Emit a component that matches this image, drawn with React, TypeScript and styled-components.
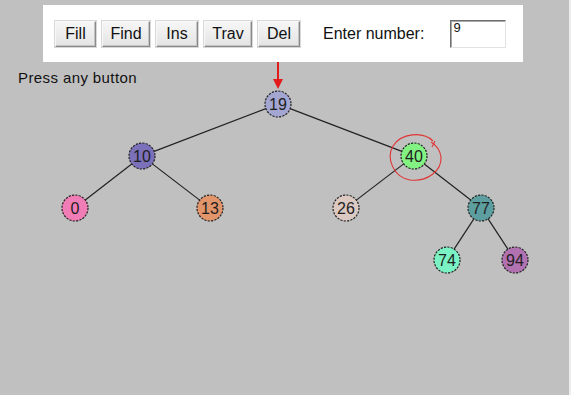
import { memo } from "react";
import styled, { createGlobalStyle } from "styled-components";

type TreeNode = { key: number; x: number; y: number; fill: string };

const NODES: TreeNode[] = [
  { key: 19, x: 278, y: 104, fill: "#a4a6d2" },
  { key: 10, x: 142, y: 156, fill: "#7b70ba" },
  { key: 40, x: 414, y: 156, fill: "#82f282" },
  { key: 0, x: 75, y: 208, fill: "#f07db5" },
  { key: 13, x: 210, y: 208, fill: "#e2946a" },
  { key: 26, x: 346, y: 208, fill: "#dccac2" },
  { key: 77, x: 481, y: 208, fill: "#5d9fa1" },
  { key: 74, x: 447, y: 260, fill: "#7af2c4" },
  { key: 94, x: 515, y: 260, fill: "#b272b2" },
];

// parent -> child
const EDGES: [number, number][] = [
  [19, 10],
  [19, 40],
  [10, 0],
  [10, 13],
  [40, 26],
  [40, 77],
  [77, 74],
  [77, 94],
];

const R = 13;
const BUTTONS: { label: string; w: number }[] = [
  { label: "Fill", w: 41 },
  { label: "Find", w: 48 },
  { label: "Ins", w: 42 },
  { label: "Trav", w: 48 },
  { label: "Del", w: 42 },
];

const byKey = (k: number) => NODES.find((n) => n.key === k)!;

const GlobalStyle = createGlobalStyle`
  html, body { margin: 0; padding: 0; }
  body { font-family: "Liberation Sans", Arial, sans-serif; }
`;

const App = memo(() => {
  return (
    <>
      <GlobalStyle />
      <Page>
        <Toolbar>
          {BUTTONS.map((b) => (
            <Button key={b.label} $w={b.w}>
              {b.label}
            </Button>
          ))}
          <Label>Enter number:</Label>
          <NumberField readOnly value="9" />
        </Toolbar>
        <Stage>
          <Status>Press any button</Status>
          <Canvas viewBox="0 62 569 333" width={569} height={333}>
            {EDGES.map(([a, b]) => {
              const p = byKey(a);
              const c = byKey(b);
              const dx = c.x - p.x;
              const dy = c.y - p.y;
              const len = Math.hypot(dx, dy);
              const ux = dx / len;
              const uy = dy / len;
              return (
                <line
                  key={`${a}-${b}`}
                  x1={p.x + ux * R}
                  y1={p.y + uy * R}
                  x2={c.x - ux * R}
                  y2={c.y - uy * R}
                  stroke="#222"
                  strokeWidth={1.2}
                />
              );
            })}
            {NODES.map((n) => (
              <g key={n.key}>
                <circle
                  cx={n.x}
                  cy={n.y}
                  r={R}
                  fill={n.fill}
                  stroke="#222"
                  strokeWidth={1.2}
                  strokeDasharray="2.2 1.2"
                />
                <NodeText x={n.x} y={n.y + 6} textAnchor="middle">
                  {n.key}
                </NodeText>
              </g>
            ))}
            {/* pointer to root */}
            <line x1={278} y1={62} x2={278} y2={82} stroke="#e31b1b" strokeWidth={2} />
            <polygon points="273,79 283,79 278,89" fill="#e31b1b" />
            {/* hand drawn mark around 40 */}
            <path
              d="M 433 141 C 423 131, 401 133, 393 146 C 386 158, 393 177, 410 180 C 427 182, 442 171, 441 157 C 440 150, 436 145, 431 142 M 432 147 L 435 141"
              fill="none"
              stroke="#e03434"
              strokeWidth={1.1}
            />
          </Canvas>
        </Stage>
      </Page>
    </>
  );
});

export default App;

// styled-components
const Page = styled.div`
  width: 571px;
  height: 395px;
  box-sizing: border-box;
  padding-top: 5px;
  background: #c0c0c0;
  border-right: 2px solid #ececec;
  display: flex;
  flex-direction: column;
  overflow: hidden;
`;
const Toolbar = styled.div`
  margin-left: 43px;
  width: 480px;
  height: 57px;
  flex-shrink: 0;
  box-sizing: border-box;
  padding-left: 12px;
  background: #ffffff;
  display: flex;
  align-items: center;
  gap: 6px;
`;
const Button = styled.button<{ $w: number }>`
  width: ${(p) => p.$w}px;
  height: 26px;
  padding: 0;
  margin: 0;
  font-family: "Liberation Sans", Arial, sans-serif;
  font-size: 16px;
  color: #111;
  background: linear-gradient(#f6f6f6, #e4e4e4);
  border: 1px solid;
  border-color: #f8f8f8 #8a8a8a #8a8a8a #f8f8f8;
  box-shadow: inset -1px -1px 0 #c4c4c4, 0 0 0 1px #d8d8d8;
  border-radius: 0;
`;
const Label = styled.span`
  margin-left: 17px;
  font-size: 16px;
  color: #111;
`;
const NumberField = styled.input`
  margin-left: 20px;
  width: 56px;
  height: 28px;
  box-sizing: border-box;
  padding: 0 2px 12px 2px;
  font-family: "Liberation Sans", Arial, sans-serif;
  font-size: 13px;
  color: #111;
  background: #fff;
  border: 1px solid;
  border-color: #6e6e6e #e2e2e2 #e2e2e2 #6e6e6e;
  box-shadow: inset 1px 1px 0 #a8a8a8;
  outline: none;
`;
const Stage = styled.div`
  flex: 1;
  display: grid;
  & > * {
    grid-area: 1 / 1;
  }
`;
const Status = styled.div`
  padding: 7px 0 0 18px;
  font-size: 15px;
  line-height: 18px;
  letter-spacing: 0.4px;
  color: #111;
  align-self: start;
`;
const Canvas = styled.svg`
  display: block;
`;
const NodeText = styled.text`
  font-family: "Liberation Sans", Arial, sans-serif;
  font-size: 16px;
  fill: #1e1e1e;
`;
